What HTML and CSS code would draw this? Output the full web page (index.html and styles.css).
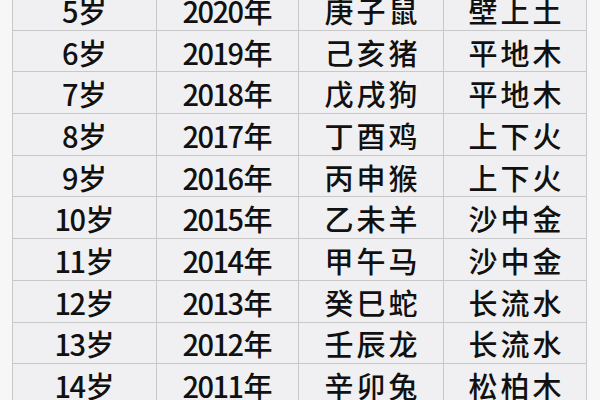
FILE: index.html
```html
<!DOCTYPE html>
<html lang="zh">
<head>
<meta charset="utf-8">
<link rel="stylesheet" href="styles.css">
</head>
<body>
<div class="page">
<table class="grid">
<colgroup><col class="c1"><col class="c2"><col class="c3"><col class="c4"></colgroup>
<tr><td><span class="num">5</span>岁</td><td><span class="num">2020</span>年</td><td class="zh">庚子鼠</td><td class="zh">壁上土</td></tr>
<tr><td><span class="num">6</span>岁</td><td><span class="num">2019</span>年</td><td class="zh">己亥猪</td><td class="zh">平地木</td></tr>
<tr><td><span class="num">7</span>岁</td><td><span class="num">2018</span>年</td><td class="zh">戊戌狗</td><td class="zh">平地木</td></tr>
<tr><td><span class="num">8</span>岁</td><td><span class="num">2017</span>年</td><td class="zh">丁酉鸡</td><td class="zh">上下火</td></tr>
<tr><td><span class="num">9</span>岁</td><td><span class="num">2016</span>年</td><td class="zh">丙申猴</td><td class="zh">上下火</td></tr>
<tr><td><span class="num">10</span>岁</td><td><span class="num">2015</span>年</td><td class="zh">乙未羊</td><td class="zh">沙中金</td></tr>
<tr><td><span class="num">11</span>岁</td><td><span class="num">2014</span>年</td><td class="zh">甲午马</td><td class="zh">沙中金</td></tr>
<tr><td><span class="num">12</span>岁</td><td><span class="num">2013</span>年</td><td class="zh">癸巳蛇</td><td class="zh">长流水</td></tr>
<tr><td><span class="num">13</span>岁</td><td><span class="num">2012</span>年</td><td class="zh">壬辰龙</td><td class="zh">长流水</td></tr>
<tr><td><span class="num">14</span>岁</td><td><span class="num">2011</span>年</td><td class="zh">辛卯兔</td><td class="zh">松柏木</td></tr>
</table>
</div>
</body>
</html>
```

FILE: styles.css
```css
html, body {
  margin: 0;
  padding: 0;
  background: #f7f7f7;
  overflow: hidden;
}
.page {
  height: 400px;
  overflow: hidden;
  padding-left: 12px;
}
.grid {
  margin-top: -12px;
  border-collapse: collapse;
  width: 574px;
  table-layout: fixed;
  background: #f0f0f2;
  font-family: "Noto Sans CJK SC", "Noto Sans", sans-serif;
  font-weight: 500;
  font-size: 29px;
  color: #111;
}
.c1 { width: 144px; }
.c2 { width: 142px; }
.c3 { width: 145px; }
.c4 { width: 143px; }
.grid td {
  height: 38.7px;
  padding: 2px 0 0;
  border: 1px solid #c8c8c8;
  text-align: center;
  vertical-align: middle;
  line-height: 1;
  white-space: nowrap;
}
.num {
  letter-spacing: -1.5px;
  margin-right: 1px;
}
.zh {
  letter-spacing: 3px;
  text-indent: 3px;
}
```
